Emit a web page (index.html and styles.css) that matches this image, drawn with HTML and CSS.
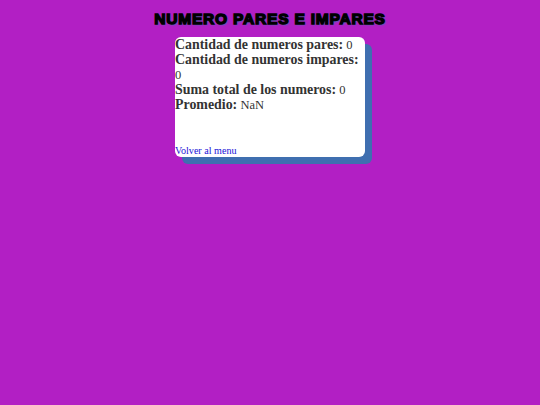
FILE: index.html
```html
<!doctype html>
<html>
<head lang="es">
	<meta charset="UTF-8">
	<title>Numero pares e impares</title>
	<link rel="stylesheet" href="styles.css">
</head>
<body>

<h1 class="title">NUMERO PARES E IMPARES</h1>

<div class="card">
	<div class="card__stats">
		<strong class="card__label">Cantidad de numeros pares:</strong> 0<br>
		<strong class="card__label">Cantidad de numeros impares:</strong> 0<br>
		<strong class="card__label">Suma total de los numeros:</strong> 0<br>
		<strong class="card__label">Promedio:</strong> NaN
	</div>
	<a class="card__link" href="#">Volver al menu</a>
</div>

</body>
</html>
```

FILE: styles.css
```css
* {
	margin: 0;
	padding: 0;
	box-sizing: border-box;
}
body {
	min-height: 100vh;
	background-color: #b21fc4;
	color: #333;
	font-family: 'Liberation Serif', serif;
	padding-top: 10px;
}
.title {
	color: #000;
	font-family: 'Liberation Sans', sans-serif;
	font-size: 15.5px;
	line-height: 18px;
	font-weight: bold;
	letter-spacing: 0.8px;
	text-align: center;
	-webkit-text-stroke: 1.4px #000;
	text-shadow: 1px 1px 2px #3c6fb0;
}
.card {
	display: flex;
	flex-direction: column;
	justify-content: space-between;
	width: 190px;
	height: 120px;
	margin: 9px auto 0;
	background-color: #fff;
	border-radius: 6px;
	box-shadow: 7px 7px 0 #3f6fb0;
}
.card__stats {
	padding-top: 1px;
	font-size: 12.5px;
	line-height: 15px;
}
.card__label {
	font-size: 13.9px;
	line-height: 13px;
}
.card__link {
	color: #1a12d8;
	font-size: 10.1px;
	line-height: 12px;
	text-decoration: none;
}
```
